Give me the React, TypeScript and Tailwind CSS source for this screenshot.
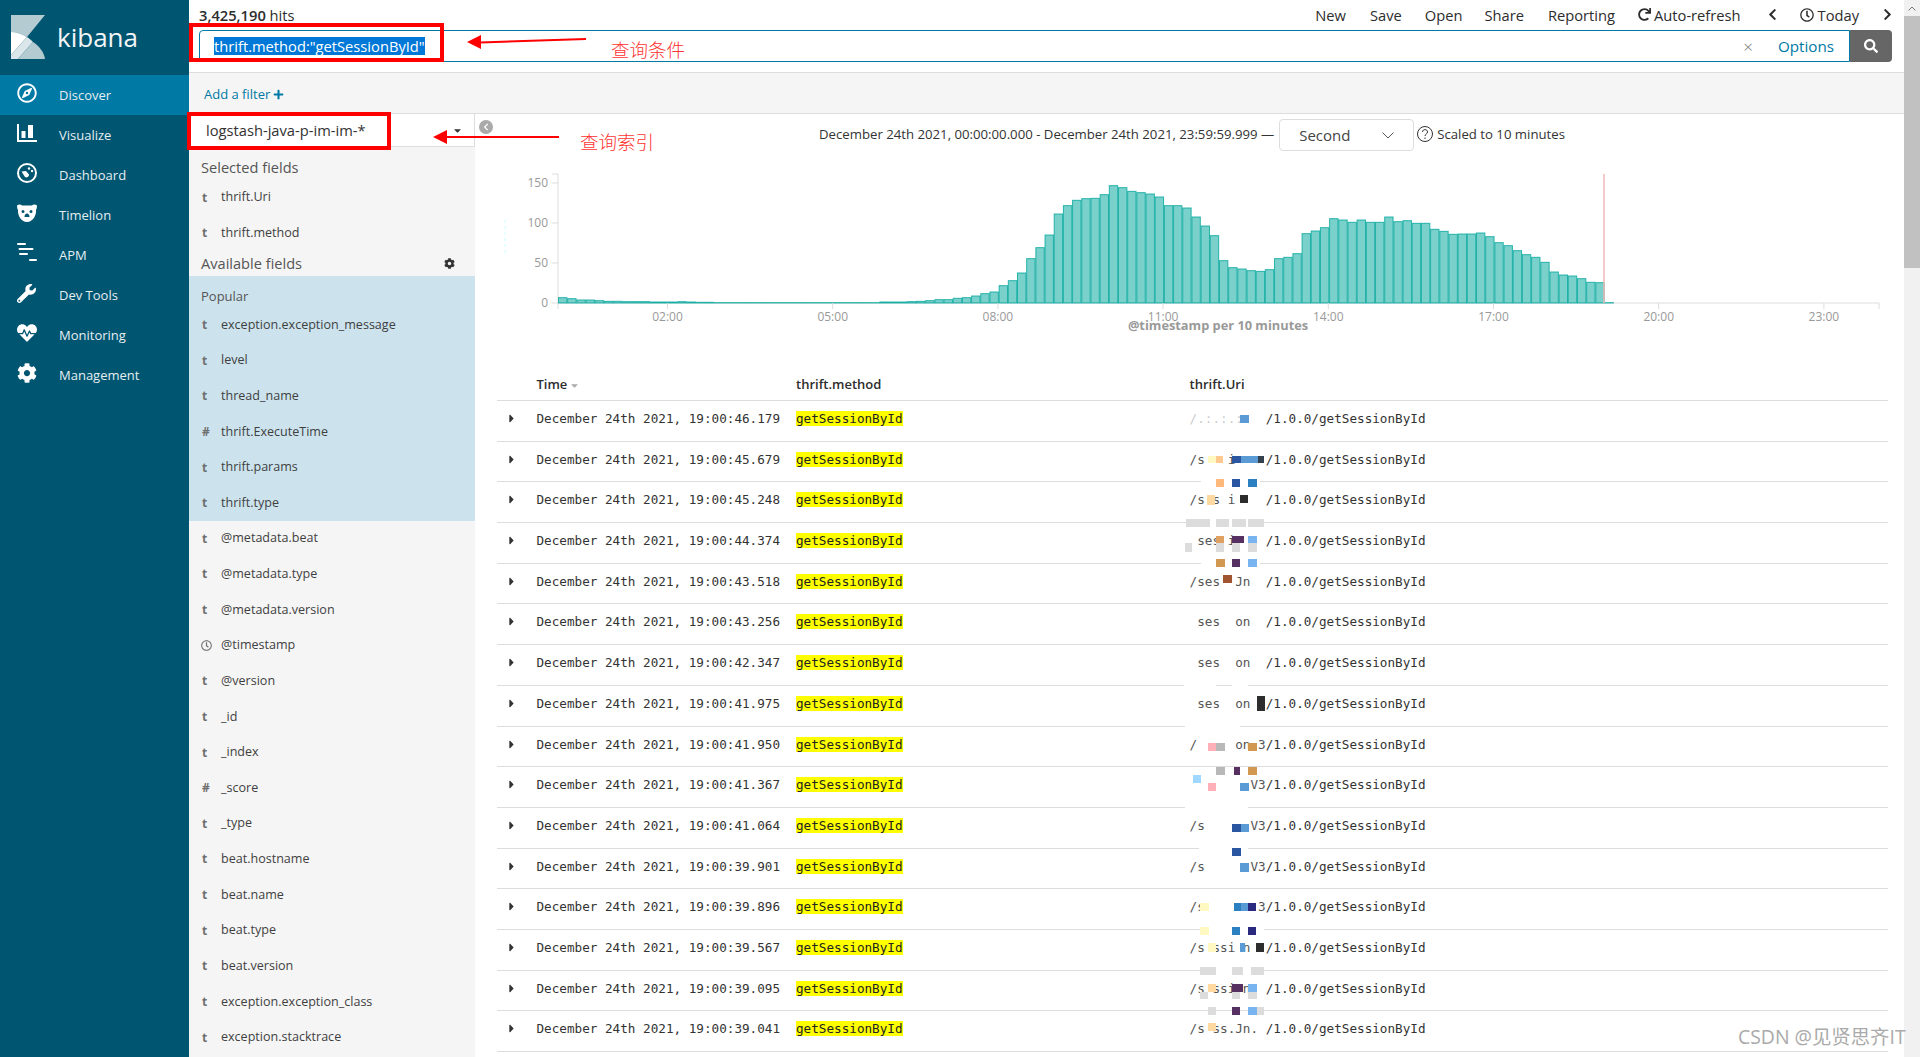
import { FaCaretDown, FaCaretRight, FaChevronLeft, FaChevronRight, FaCog, FaHeartbeat, FaPlus, FaRedo, FaRegClock, FaRegCompass, FaSearch, FaWrench } from "react-icons/fa"

// top edge of each 10 minute bar, read off the chart (baseline is 908, 3 units per px)
const barTops = [
  892, 895, 899, 899, 901, 903, 903, 904, 904, 904, 905, 905, 905, 904, 905, 906, 906, 907, 907, 907, 907, 907, 907, 907,
  907, 907, 907, 907, 907, 907, 907, 907, 907, 907, 907, 905, 905, 905, 904, 903, 901, 898, 898, 894, 892, 887, 880, 875,
  856, 841, 818, 775, 742, 704, 641, 616, 600, 595, 594, 583, 556, 562, 573, 577, 581, 590, 616, 616, 623, 650, 677, 706,
  781, 802, 806, 811, 813, 808, 775, 771, 760, 700, 692, 682, 655, 659, 666, 659, 666, 666, 650, 664, 661, 669, 669, 687,
  693, 702, 701, 701, 698, 709, 727, 736, 751, 763, 771, 786, 815, 824, 827, 835, 846, 847, 907,
]

const navItems = ["Discover", "Visualize", "Dashboard", "Timelion", "APM", "Dev Tools", "Monitoring", "Management"]

const selectedFields = ["thrift.Uri", "thrift.method"]

const popularFields = [
  ["t", "exception.exception_message"],
  ["t", "level"],
  ["t", "thread_name"],
  ["#", "thrift.ExecuteTime"],
  ["t", "thrift.params"],
  ["t", "thrift.type"],
]

const otherFields = [
  ["t", "@metadata.beat"],
  ["t", "@metadata.type"],
  ["t", "@metadata.version"],
  ["c", "@timestamp"],
  ["t", "@version"],
  ["t", "_id"],
  ["t", "_index"],
  ["#", "_score"],
  ["t", "_type"],
  ["t", "beat.hostname"],
  ["t", "beat.name"],
  ["t", "beat.type"],
  ["t", "beat.version"],
  ["t", "exception.exception_class"],
  ["t", "exception.stacktrace"],
]

const rows = [
  ["46.179", "/.:.:.:   "],
  ["45.679", "/s   i    "],
  ["45.248", "/s s i    "],
  ["44.374", " ses i    "],
  ["43.518", "/ses  Jn  "],
  ["43.256", " ses  on  "],
  ["42.347", " ses  on  "],
  ["41.975", " ses  on  "],
  ["41.950", "/     on 3"],
  ["41.367", "        V3"],
  ["41.064", "/s      V3"],
  ["39.901", "/s      V3"],
  ["39.896", "/s       3"],
  ["39.567", "/s ssi n  "],
  ["39.095", "/s ssi n  "],
  ["39.041", "/s ss.Jn. "],
]

const blue = "#5a9bd5"
const navy = "#2a55a0"
const plum = "#553060"
const sky = "#78b4f0"
const grey = "#dcdcdc"
const dark = "#2d2d2d"
const peach = "#ffd9a0"
const pale = "#fff8c0"
const pink = "#ffb0b8"
const tan = "#d09850"

// mosaic left over where the uri was blanked out: x, y, w, h, colour
const mosaic: [number, number, number, number, string][] = [
  [1201, 481, 59, 3, "#fff"], [1186, 522, 78, 3, "#fff"], [1201, 563, 59, 3, "#fff"],
  [1184, 604, 32, 2, "#fff"], [1232, 604, 16, 2, "#fff"], [1184, 645, 32, 2, "#fff"], [1232, 645, 16, 2, "#fff"],
  [1184, 685, 32, 2, "#fff"], [1232, 685, 16, 2, "#fff"], [1185, 726, 55, 2, "#fff"], [1185, 807, 63, 2, "#fff"],
  [1199, 848, 49, 2, "#fff"], [1199, 889, 49, 2, "#fff"], [1200, 929, 64, 2, "#fff"], [1200, 970, 64, 2, "#fff"], [1200, 1011, 64, 2, "#fff"],
  [1240, 415, 9, 8, blue],
  [1208, 456, 8, 7, pale], [1216, 456, 7, 7, "#ffc98f"], [1232, 456, 9, 7, navy], [1241, 456, 17, 7, blue], [1258, 456, 6, 7, "#33414f"],
  [1216, 479, 8, 8, "#ffb97a"], [1232, 479, 8, 8, navy], [1248, 479, 9, 8, "#2a80c0"],
  [1207, 495, 8, 10, peach], [1240, 495, 8, 8, dark],
  [1186, 519, 24, 8, grey], [1216, 519, 13, 8, grey], [1232, 519, 14, 8, grey], [1248, 519, 16, 8, grey],
  [1216, 536, 8, 7, "#e0a060"], [1232, 536, 12, 7, plum], [1248, 536, 9, 7, sky],
  [1185, 543, 7, 9, grey], [1216, 543, 8, 9, grey], [1232, 543, 8, 9, grey], [1248, 543, 9, 9, grey],
  [1216, 559, 9, 8, tan], [1232, 559, 8, 8, plum], [1248, 559, 9, 8, sky],
  [1223, 575, 9, 8, "#a05530"],
  [1257, 696, 8, 15, dark],
  [1208, 743, 8, 8, pink], [1216, 743, 9, 8, "#b8b8b8"], [1248, 743, 9, 8, tan],
  [1216, 767, 9, 8, "#b8b8b8"], [1234, 767, 6, 8, plum], [1248, 767, 9, 8, tan],
  [1193, 775, 8, 8, "#a0d8ff"], [1208, 783, 8, 8, pink], [1240, 783, 9, 8, blue],
  [1232, 824, 9, 8, navy], [1241, 824, 8, 8, blue],
  [1232, 848, 9, 8, navy],
  [1240, 863, 9, 9, blue],
  [1200, 903, 9, 8, pale], [1234, 903, 7, 8, "#2a80c0"], [1241, 903, 7, 8, blue], [1248, 903, 8, 8, "#2a2a80"],
  [1200, 927, 9, 8, pale], [1232, 927, 8, 8, "#2a80c0"], [1248, 927, 8, 8, "#2a2a80"],
  [1208, 943, 8, 9, pale], [1240, 943, 5, 9, blue], [1256, 943, 8, 9, dark],
  [1200, 967, 16, 8, grey], [1232, 967, 11, 8, grey], [1251, 967, 13, 8, grey],
  [1208, 984, 8, 8, peach], [1232, 984, 11, 8, plum], [1248, 984, 9, 8, sky],
  [1200, 992, 8, 7, grey], [1232, 992, 8, 7, grey], [1248, 992, 9, 7, grey],
  [1208, 1007, 8, 8, grey], [1232, 1007, 8, 8, plum], [1248, 1007, 9, 8, sky], [1257, 1007, 7, 8, grey],
  [1208, 1023, 8, 8, peach],
]

function KibanaLogo() {
  return (
    <svg viewBox="0 0 34 44" className="h-[44px] w-[34px]">
      <path d="M0 0H34L16 22C11 19 6 17 0 17Z" fill="#b5cbd2" />
      <path d="M0 17C6 17 11 19 16 22L0 40Z" fill="#fff" />
      <path d="M16 22L0 40V44H7L22 27C20 25 18 23 16 22Z" fill="#dbe6ea" />
      <path d="M22 27L7 44H34C33 37 28 31 22 27Z" fill="#b5cbd2" />
    </svg>
  )
}

function NavIcon({ name }: { name: string }) {
  if (name === "Discover") return <FaRegCompass size={20} />
  if (name === "Visualize") {
    return (
      <svg viewBox="0 0 20 18" className="h-[18px] w-[20px]" fill="currentColor">
        <path d="M0 0H2V16H20V18H0Z" />
        <rect x="4.5" y="7" width="4" height="7" />
        <rect x="11" y="1" width="5" height="13" />
      </svg>
    )
  }
  if (name === "Dashboard") {
    return (
      <svg viewBox="0 0 20 20" className="h-5 w-5" fill="currentColor">
        <path fillRule="evenodd" d="M10 0a10 10 0 1 0 0 20a10 10 0 0 0 0-20ZM10 2a8 8 0 1 1 0 16a8 8 0 0 1 0-16Z" />
        <path d="M4.5 8.5L9 8l3 3.5a2.5 2.5 0 0 1-4.2 2.2Z" />
        <circle cx="12" cy="5.5" r="1.2" />
        <circle cx="15" cy="8" r="1.2" />
      </svg>
    )
  }
  if (name === "Timelion") {
    return (
      <svg viewBox="0 0 20 18" className="h-[18px] w-5" fill="currentColor">
        <path
          fillRule="evenodd"
          d="M0 1.5C2 0 4 .5 5 1.5H15C16 .5 18 0 20 1.5C20 4 19.5 5 19 6C19.5 11 16 18 10 18C4 18 .5 11 1 6C.5 5 0 4 0 1.5ZM6 6a1.4 1.4 0 1 0 0 3a1.4 1.4 0 0 0 0-3ZM14 6a1.4 1.4 0 1 0 0 3a1.4 1.4 0 0 0 0-3ZM10 9.5C8.5 9.5 7.5 11 7.5 13H12.500C12.500 11 11.500 9.500 10 9.500Z"
        />
      </svg>
    )
  }
  if (name === "APM") {
    return (
      <svg viewBox="0 0 20 20" className="h-5 w-5" fill="currentColor">
        <rect x="0" y="0" width="9" height="2" rx="1" />
        <rect x="1.500" y="5" width="15" height="2" rx="1" />
        <rect x="2" y="10" width="9" height="2" rx="1" />
        <rect x="12" y="16" width="8" height="2" rx="1" />
      </svg>
    )
  }
  if (name === "Dev Tools") return <FaWrench size={19} />
  if (name === "Monitoring") return <FaHeartbeat size={20} />
  return <FaCog size={20} />
}

function Sidebar() {
  return (
    <aside className="flex h-full w-[189px] shrink-0 flex-col bg-[#005571] text-white">
      <div className="flex h-[75px] items-start gap-[12px] pl-[11px] pt-[15px]">
        <KibanaLogo />
        <span className="mt-[-1px] text-[26px] leading-[46px] text-[#f2f6f7]">kibana</span>
      </div>
      {navItems.map((name) => (
        <div key={name} className={`flex h-10 items-center pl-[17px] ${name === "Discover" ? "bg-[#0079a5]" : ""}`}>
          <span className="flex w-[42px] -translate-y-[2px] items-center">
            <NavIcon name={name} />
          </span>
          <span className="text-[13px] leading-none text-[#e6eef1]">{name}</span>
        </div>
      ))}
    </aside>
  )
}

function TopBar() {
  return (
    <div className="flex h-[30px] items-center justify-between pl-[10px] pr-[11px] text-[14.7px] text-[#2d2d2d]">
      <div>
        <span className="font-semibold">3,425,190</span> hits
      </div>
      <div className="flex items-center">
        <span className="mr-[24px]">New</span>
        <span className="mr-[23px]">Save</span>
        <span className="mr-[22px]">Open</span>
        <span className="mr-[24px]">Share</span>
        <span className="mr-[23px]">Reporting</span>
        <FaRedo size={13} className="mr-[3px]" />
        <span className="mr-[25px]">Auto-refresh</span>
        <FaChevronLeft size={13} className="mr-[21px]" />
        <FaRegClock size={14} className="mr-[4px]" />
        <span className="mr-[22px]">Today</span>
        <FaChevronRight size={13} className="-mr-[1px]" />
      </div>
    </div>
  )
}

function QueryBar() {
  return (
    <div className="flex h-[43px] flex-col border-b border-[#ddd]">
      <div className="ml-[10px] mr-[12px] flex h-[32px]">
        <div className="flex flex-1 items-center rounded-l-[4px] border border-[#0079a5] pl-[14px] pr-[15px]">
          <span className="bg-[#0078d7] text-[14.7px] leading-[18px] text-white">thrift.method:"getSessionById"</span>
          <span className="ml-auto mr-[25px] text-[17px] font-light leading-none text-[#777]">×</span>
          <span className="text-[15.2px] text-[#0079a5]">Options</span>
        </div>
        <div className="flex w-[42px] items-center justify-center rounded-r-[4px] bg-[#666] text-white">
          <FaSearch size={14} />
        </div>
      </div>
    </div>
  )
}

function FieldRow({ type, name }: { type: string; name: string }) {
  return (
    <div className="flex h-[35.63px] items-center pl-[13px] text-[12.55px] text-[#3f3f3f]">
      <span className="flex w-[19px] items-center text-[12px] font-bold text-[#6f6f6f]">
        {type === "c" ? <FaRegClock size={11} className="-ml-[1px]" /> : type}
      </span>
      {name}
    </div>
  )
}

function FieldList() {
  return (
    <div className="w-[286px] shrink-0 overflow-hidden bg-[#f5f5f5]">
      <div className="flex h-[33px] items-center justify-between border-b border-r border-[#ddd] bg-white pl-[17px] pr-[11px] pt-[1px] text-[14.7px] text-[#333]">
        logstash-java-p-im-im-*
        <FaCaretDown size={11} />
      </div>
      <div className="pl-[12px] pt-[10px] text-[14.6px] leading-[20px] text-[#555]">Selected fields</div>
      <div className="mt-[3px]">
        {selectedFields.map((name) => (
          <FieldRow key={name} type="t" name={name} />
        ))}
      </div>
      <div className="flex h-[24px] items-center justify-between pl-[12px] pr-[20px] pt-[1px] text-[14.6px] text-[#555]">
        Available fields
        <FaCog size={11} className="text-[#333]" />
      </div>
      <div className="mt-[1px] bg-[#cce3ee] pt-[9px]">
        <div className="pl-[12px] text-[13px] leading-[22px] text-[#555]">Popular</div>
        {popularFields.map(([type, name]) => (
          <FieldRow key={name} type={type} name={name} />
        ))}
      </div>
      {otherFields.map(([type, name]) => (
        <FieldRow key={name} type={type} name={name} />
      ))}
    </div>
  )
}

function RangeRow() {
  return (
    <div className="flex h-[46px] items-start pl-[344px] text-[13.2px] text-[#333]">
      <span className="mt-[12px] whitespace-pre leading-[16px]">December 24th 2021, 00:00:00.000 - December 24th 2021, 23:59:59.999 —</span>
      <div className="ml-[5px] mt-[5px] flex h-[32px] w-[135px] items-center justify-between rounded-[4px] border border-[#ddd] pl-[19px] pr-[19px] text-[15px] text-[#444]">
        Second
        <svg viewBox="0 0 12 7" className="h-[7px] w-[12px]" fill="none" stroke="#555" strokeWidth="1">
          <path d="M.5 .5L6 6L11.500 .5" />
        </svg>
      </div>
      <svg viewBox="0 0 16 18" className="ml-[3px] mt-[11px] h-[18px] w-[16px]" fill="none" stroke="#333" strokeWidth="1">
        <circle cx="8" cy="9" r="7.500" />
        <path d="M5.500 7C5.500 3.800 10.500 3.800 10.500 7C10.500 9 8 9 8 11M8 12.500V14" />
      </svg>
      <span className="ml-[4px] mt-[12px] leading-[16px]">Scaled to 10 minutes</span>
    </div>
  )
}

function Histogram() {
  const x0 = 558
  const step = 9.18
  const ticks = ["02:00", "05:00", "08:00", "11:00", "14:00", "17:00", "20:00", "23:00"]
  return (
    <svg viewBox="475 160 1429 200" className="block h-[200px] w-[1429px]" fontFamily="'Open Sans', sans-serif">
      <line x1="505" x2="505" y1="220" y2="255" stroke="#ccffff" strokeDasharray="3 3" />
      <path d="M558 174V309M552 174H558M552 183H558M552 223H558M552 263H558M552 303H1879M1879 303V309" stroke="#ddd" fill="none" />
      {[["150", 183], ["100", 223], ["50", 263], ["0", 303]].map(([label, y]) => (
        <text key={label} x="548" y={Number(y) + 4} textAnchor="end" fontSize="12" fill="#999">
          {label}
        </text>
      ))}
      {barTops.map((top, i) => {
        const h = (908 - top) / 3
        return (
          <rect
            key={i}
            x={x0 + i * step + 0.5}
            y={303 - h}
            width={step - 0.8}
            height={h}
            fill="#00a69b"
            fillOpacity="0.52"
            stroke="#00a69b"
            strokeOpacity="0.8"
          />
        )
      })}
      <line x1="1604" x2="1604" y1="174" y2="303" stroke="#f0b8b8" strokeWidth="1.500" />
      {ticks.map((label, i) => {
        const x = 667.500 + i * 165.2
        return (
          <g key={label}>
            <line x1={x} x2={x} y1="303" y2="309" stroke="#ddd" />
            <text x={x} y="321" textAnchor="middle" fontSize="12" fill="#999">
              {label}
            </text>
          </g>
        )
      })}
      <text x="1218" y="330" textAnchor="middle" fontSize="12.800" fontWeight="700" fill="#999">
        @timestamp per 10 minutes
      </text>
    </svg>
  )
}

function DocTable() {
  return (
    <div className="ml-[22px] w-[1391px]">
      <div className="flex h-[41px] items-start border-b border-[#ddd] pl-[39.500px] pt-[15px] text-[13px] font-semibold leading-[18px] text-[#2d2d2d]">
        <span className="flex w-[259.500px] items-center">
          Time
          <FaCaretDown size={11} className="ml-[2px] mt-[3px] text-[#aaa]" />
        </span>
        <span className="w-[393.600px]">thrift.method</span>
        <span>thrift.Uri</span>
      </div>
      {rows.map(([seconds, prefix], i) => (
        <div
          key={seconds}
          className="relative flex h-[40.700px] items-start whitespace-pre border-b border-[#ddd] pt-[10px] font-['DejaVu_Sans_Mono',monospace] text-[12.650px] leading-[16px] text-[#333]"
        >
          <FaCaretRight size={13} className="ml-[10px] mt-[1px] w-[29.500px] pr-[20px] text-[#333]" />
          <span className="w-[259.500px]">December 24th 2021, 19:00:{seconds}</span>
          <span className="w-[393.600px]">
            <mark className="bg-[#ffff00] text-[#222]">getSessionById</mark>
          </span>
          <span className={i === 0 ? "text-[#ccc]" : "text-[#555]"}>{prefix}</span>
          <span>/1.0.0/getSessionById</span>
        </div>
      ))}
    </div>
  )
}

function Annotations() {
  return (
    <div className="pointer-events-none absolute inset-0">
      {mosaic.map(([x, y, w, h, c], i) => (
        <div key={i} className="absolute" style={{ left: x, top: y, width: w, height: h, background: c }} />
      ))}
      <div className="absolute left-[189px] top-[23px] h-[39px] w-[255px] border-[4px] border-[#f00]" />
      <div className="absolute left-[187px] top-[112px] h-[38px] w-[204px] border-[4px] border-[#f00]" />
      <svg viewBox="0 0 1920 200" className="absolute left-0 top-0 h-[200px] w-[1920px]" fill="#f00">
        <path d="M467 42L481 35V49Z" />
        <path d="M480 41.500L586 38V40L480 43.500Z" />
        <path d="M433 137L447 130V144Z" />
        <path d="M446 136H559V138H446Z" />
      </svg>
      <span className="absolute left-[611px] top-[37px] font-['Noto_Sans_CJK_SC',sans-serif] text-[18.500px] font-light leading-[24px] text-[#f33]">
        查询条件
      </span>
      <span className="absolute left-[580px] top-[129px] font-['Noto_Sans_CJK_SC',sans-serif] text-[18.500px] font-light leading-[24px] text-[#f33]">
        查询索引
      </span>
      <span className="absolute left-[479px] top-[120px] flex h-[14px] w-[14px] items-center justify-center rounded-full bg-[#aaa] text-white">
        <FaChevronLeft size={8} />
      </span>
      <span className="absolute left-[1738px] top-[1024px] font-['Open_Sans','Noto_Sans_CJK_SC',sans-serif] text-[19.400px] leading-[26px] text-[#aaa]">
        CSDN @见贤思齐IT
      </span>
    </div>
  )
}

export default function App() {
  return (
    <div className="relative flex h-[1057px] w-[1920px] overflow-hidden bg-white font-['Open_Sans',sans-serif]">
      <Sidebar />
      <main className="flex min-w-0 flex-1 flex-col">
        <TopBar />
        <QueryBar />
        <div className="flex h-[41px] items-center border-b border-[#ddd] bg-[#f5f5f5] pl-[15px] pt-[3px] text-[13px] text-[#0079a5]">
          Add a filter
          <FaPlus size={11} className="ml-[3px]" />
        </div>
        <div className="flex min-h-0 flex-1">
          <FieldList />
          <div className="min-w-0 flex-1">
            <RangeRow />
            <Histogram />
            <DocTable />
          </div>
        </div>
      </main>
      <div className="flex w-[16px] shrink-0 flex-col bg-[#f1f1f1]">
        <div className="flex h-[16px] items-center justify-center">
          <svg viewBox="0 0 8 5" className="h-[5px] w-[8px]" fill="none" stroke="#777">
            <path d="M.5 4.500L4 1L7.500 4.500" />
          </svg>
        </div>
        <div className="h-[252px] bg-[#c1c1c1]" />
      </div>
      <Annotations />
    </div>
  )
}
